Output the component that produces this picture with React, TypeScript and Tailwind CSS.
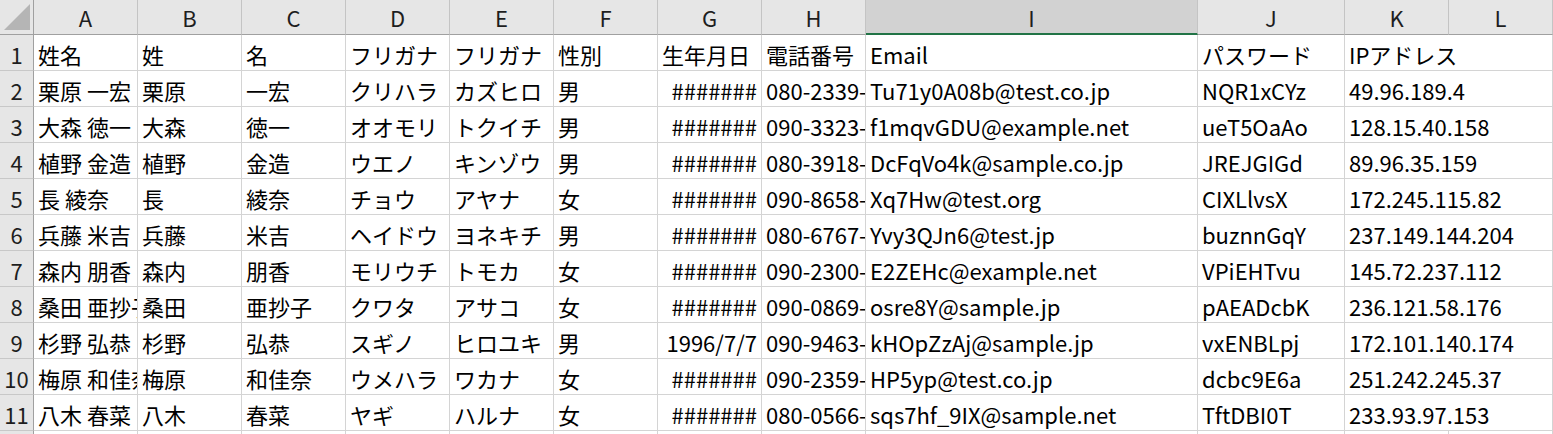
import React from "react";

const cols = ["A", "B", "C", "D", "E", "F", "G", "H", "I", "J", "K", "L"];

type Row = string[];
const rows: Row[] = [
  ["姓名", "姓", "名", "フリガナ", "フリガナ", "性別", "生年月日", "電話番号", "Email", "パスワード", "IPアドレス", ""],
  ["栗原 一宏", "栗原", "一宏", "クリハラ", "カズヒロ", "男", "#######", "080-2339-", "Tu71y0A08b@test.co.jp", "NQR1xCYz", "49.96.189.4", ""],
  ["大森 徳一", "大森", "徳一", "オオモリ", "トクイチ", "男", "#######", "090-3323-", "f1mqvGDU@example.net", "ueT5OaAo", "128.15.40.158", ""],
  ["植野 金造", "植野", "金造", "ウエノ", "キンゾウ", "男", "#######", "080-3918-", "DcFqVo4k@sample.co.jp", "JREJGIGd", "89.96.35.159", ""],
  ["長 綾奈", "長", "綾奈", "チョウ", "アヤナ", "女", "#######", "090-8658-", "Xq7Hw@test.org", "CIXLlvsX", "172.245.115.82", ""],
  ["兵藤 米吉", "兵藤", "米吉", "ヘイドウ", "ヨネキチ", "男", "#######", "080-6767-", "Yvy3QJn6@test.jp", "buznnGqY", "237.149.144.204", ""],
  ["森内 朋香", "森内", "朋香", "モリウチ", "トモカ", "女", "#######", "090-2300-", "E2ZEHc@example.net", "VPiEHTvu", "145.72.237.112", ""],
  ["桑田 亜抄子", "桑田", "亜抄子", "クワタ", "アサコ", "女", "#######", "090-0869-", "osre8Y@sample.jp", "pAEADcbK", "236.121.58.176", ""],
  ["杉野 弘恭", "杉野", "弘恭", "スギノ", "ヒロユキ", "男", "1996/7/7", "090-9463-", "kHOpZzAj@sample.jp", "vxENBLpj", "172.101.140.174", ""],
  ["梅原 和佳奈", "梅原", "和佳奈", "ウメハラ", "ワカナ", "女", "#######", "090-2359-", "HP5yp@test.co.jp", "dcbc9E6a", "251.242.245.37", ""],
  ["八木 春菜", "八木", "春菜", "ヤギ", "ハルナ", "女", "#######", "080-0566-", "sqs7hf_9IX@sample.net", "TftDBI0T", "233.93.97.153", ""],
  ["", "", "", "", "", "", "", "", "", "", "", ""],
];

function cellClass(i: number, j: number, v: string) {
  if (i > 0 && j === 6) {
    return "flex h-[36px] items-center justify-end overflow-hidden whitespace-nowrap border-b border-r border-[#d4d4d4] pt-[2px] pr-[4px]";
  }
  if (j === 10 && v !== "") {
    return "relative z-10 flex h-[36px] items-center overflow-visible whitespace-nowrap border-b border-[#d4d4d4] pt-[2px] pl-[4px]";
  }
  return "flex h-[36px] items-center overflow-hidden whitespace-nowrap border-b border-r border-[#d4d4d4] pt-[2px] pl-[4px]";
}

export default function App() {
  return (
    <div className="h-[434px] w-[1553px] overflow-hidden bg-white font-['Noto_Sans_CJK_JP','Noto_Sans',sans-serif] text-[22px] leading-none text-black">
      <div className="grid grid-cols-[34px_repeat(8,104px)_332px_147px_104px_104px_1px]">
        {/* header row */}
        <div className="relative h-[35px] border-b border-r border-[#a0a0a0] bg-[#e6e6e6]">
          <svg className="absolute left-0 top-0" width="33" height="34" viewBox="0 0 33 34">
            <polygon points="4,30 30,4 30,30" fill="#b5b5b5" />
          </svg>
        </div>
        {cols.map((c) =>
          c === "I" ? (
            <div
              key={c}
              className="flex h-[35px] items-center justify-center border-b-2 border-r border-b-[#217346] border-r-[#c4c4c4] bg-[#d2d2d2] pt-[1px] text-[#1e1e1e]"
            >
              {c}
            </div>
          ) : (
            <div
              key={c}
              className="flex h-[35px] items-center justify-center border-b border-r border-b-[#a0a0a0] border-r-[#c4c4c4] bg-[#e6e6e6] text-[#1e1e1e]"
            >
              {c}
            </div>
          )
        )}
        <div className="h-[35px] border-b border-[#a0a0a0] bg-[#e6e6e6]" />
        {rows.map((r, i) => (
          <React.Fragment key={i}>
            <div className="flex h-[36px] items-center justify-center border-b border-r border-b-[#c8c8c8] border-r-[#a0a0a0] bg-[#e6e6e6] pt-[2px] text-[#1e1e1e]">
              {i + 1}
            </div>
            {r.map((v, j) => (
              <div key={j} className={cellClass(i, j, v)}>
                {v}
              </div>
            ))}
            <div className="h-[36px]" />
          </React.Fragment>
        ))}
      </div>
    </div>
  );
}
